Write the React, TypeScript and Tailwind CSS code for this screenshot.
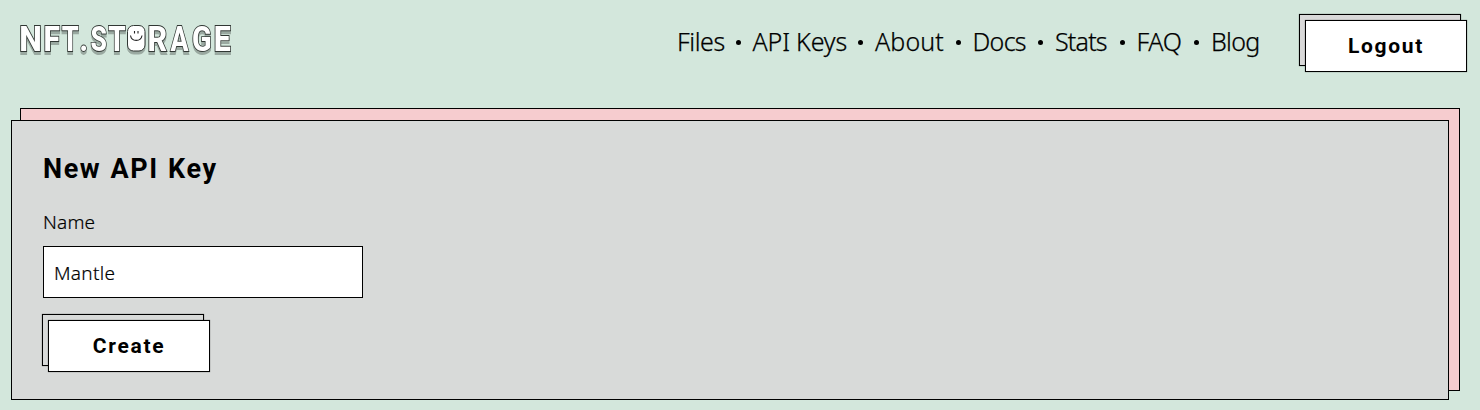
import { useState } from "react";

const links = [
  { label: "Files", box: "w-[47px]", text: "tracking-[-0.4px]" },
  { label: "API Keys", box: "w-[94px]", text: "tracking-[-0.15px]" },
  { label: "About", box: "w-[69px]", text: "tracking-[0.1px]" },
  { label: "Docs", box: "w-[54px]", text: "tracking-[-0.7px]" },
  { label: "Stats", box: "w-[53px]", text: "tracking-[-0.8px]" },
  { label: "FAQ", box: "w-[46px]", text: "tracking-[-0.3px]" },
  { label: "Blog", box: "w-[49px]", text: "tracking-[-0.7px]" },
];

const glyphs = [
  { c: "N", x: -0.8, w: 22.6 },
  { c: "F", x: 23.4, w: 16.4 },
  { c: "T", x: 41.7, w: 17 },
  { c: ".", x: 59.6, w: 8.5 },
  { c: "S", x: 70.6, w: 16.4 },
  { c: "T", x: 88.2, w: 17.4 },
  { c: "R", x: 127.6, w: 19.6 },
  { c: "A", x: 150.4, w: 18 },
  { c: "G", x: 172, w: 19.6 },
  { c: "E", x: 193.8, w: 17 },
];

function Logo() {
  return (
    <svg width="214" height="34" viewBox="0 0 214 34" className="block overflow-visible font-['Roboto',sans-serif] drop-shadow-[0_3px_0_#9aa9a1]">
      <g fontSize="34.500" fontWeight="800" fill="#fff" stroke="#303733" strokeWidth="1.8" paintOrder="stroke">
        {glyphs.map((g, i) => (
          <text key={i} x={g.x} y="27.800" textLength={g.w} lengthAdjust="spacingAndGlyphs">
            {g.c}
          </text>
        ))}
      </g>
      <rect x="107.5" y="2.5" width="17.500" height="25.500" rx="6" fill="#fff" stroke="#303733" />
      <path d="M114.500 8v2.500M118 8v2.500M110.500 12.500c1 6.500 10.500 6.500 11.500 0" fill="none" stroke="#222" strokeWidth="1.100" />
    </svg>
  );
}

function Button({ children, shade }: { children: string; shade: string }) {
  return (
    <button className="relative block h-[58px] w-[168px] pt-[6px] pl-[6px] font-['Roboto',sans-serif]">
      <span className={"absolute top-0 left-0 h-[52px] w-[162px] border border-black shadow-[0_0_1px_#0008] " + shade} />
      <span className="relative flex h-[52px] w-[162px] items-center justify-center border border-black bg-white pt-[2px] text-[21px] font-bold tracking-[1.7px] shadow-[0_0_1px_#0008]">
        {children}
      </span>
    </button>
  );
}

export default function App() {
  const [name, setName] = useState("Mantle");
  return (
    <div className="h-[410px] overflow-hidden bg-[#d3e7dc] font-['Noto_Sans',sans-serif] text-black">
      <header className="flex h-[108px] items-start justify-between pr-[13px] pl-[20px]">
        <div className="pt-[23px]"><Logo /></div>
        <div className="flex">
          <nav className="mr-[39px] flex pt-[23px] text-[25px] leading-[36px] font-[350] whitespace-nowrap [-webkit-text-stroke:0.25px_black]">
            {links.map((l, i) => (
              <div key={l.label} className="flex">
                {i > 0 && (
                  <span className="flex h-[38px] w-[28.500px] items-center justify-center">
                    <span className="size-[5px] rounded-full bg-black" />
                  </span>
                )}
                <a href="#" className={l.box + " " + l.text}>{l.label}</a>
              </div>
            ))}
          </nav>
          <div className="pt-[14px]"><Button shade="bg-[#d9d9d9]">Logout</Button></div>
        </div>
      </header>
      <main className="relative pl-[11px]">
        <div className="absolute top-0 left-[20px] h-[283px] w-[1440px] border border-black bg-[#f6cccf]" />
        <div className="pt-[12px]">
          <section className="relative h-[280px] w-[1438px] border border-black bg-[#d8dad9] pt-[30px] pl-[31px]">
            <h1 className="font-['Roboto',sans-serif] text-[27px] leading-[36px] font-bold tracking-[1.6px] [word-spacing:1px]">New API Key</h1>
            <label htmlFor="name" className="mt-[21px] block text-[19px] leading-[28px] font-[350] tracking-[0.2px] [-webkit-text-stroke:0.2px_black]">Name</label>
            <input
              id="name"
              value={name}
              onChange={(e) => setName(e.target.value)}
              className="mt-[10px] block h-[52px] w-[320px] border border-black bg-white px-[10px] pt-[2px] text-[19px] font-[350] tracking-[0.3px] outline-none [-webkit-text-stroke:0.2px_black]"
            />
            <div className="mt-[16px] -ml-px"><Button shade="bg-[#d8dad9]">Create</Button></div>
          </section>
        </div>
      </main>
    </div>
  );
}
